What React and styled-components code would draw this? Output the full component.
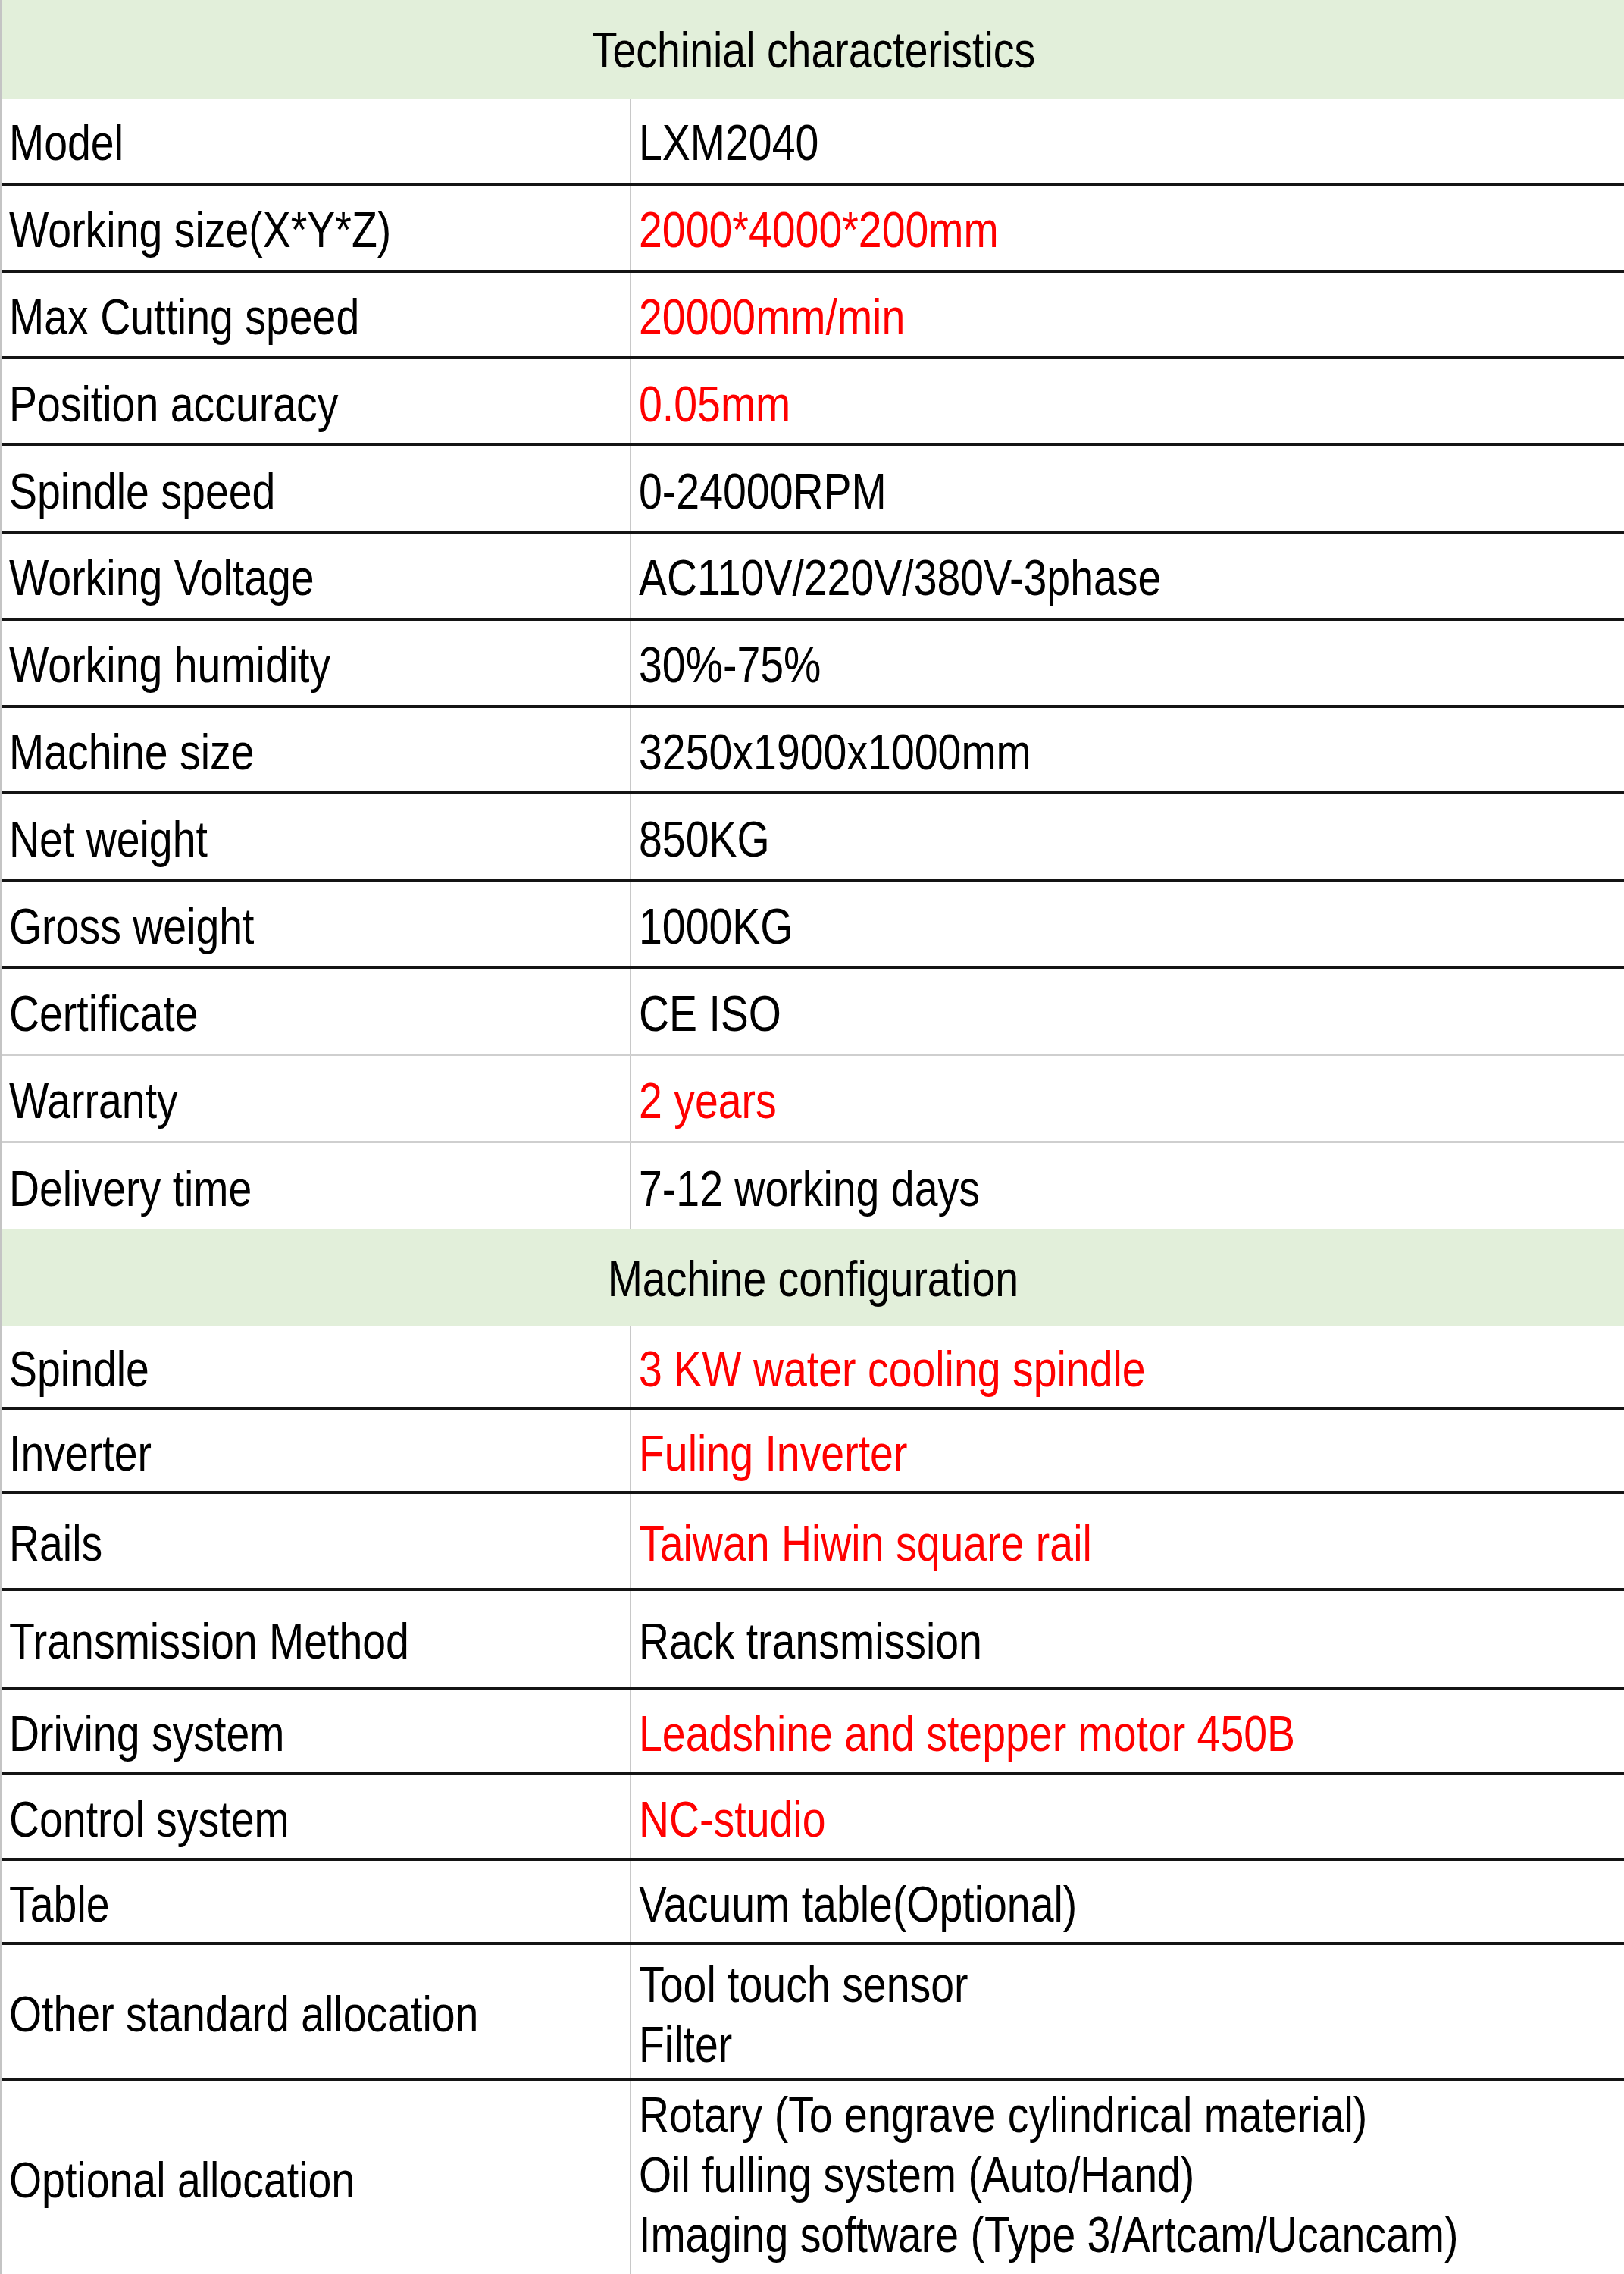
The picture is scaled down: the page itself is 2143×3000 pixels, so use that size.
import React from 'react';
import styled, { createGlobalStyle } from 'styled-components';

const GlobalStyle = createGlobalStyle`
  html, body {
    margin: 0;
    padding: 0;
    background: #ffffff;
  }
  body {
    font-family: "Liberation Sans", Arial, sans-serif;
    -webkit-font-smoothing: auto;
  }
`;

const Sheet = styled.div`
  width: 2143px;
  box-sizing: border-box;
  border-left: 3px solid #c4c4c4;
  display: flex;
  flex-direction: column;
  color: #000;
  font-size: 66px;
  line-height: 1.15;
`;

const SectionHeader = styled.div`
  height: ${p => p.$h}px;
  background-color: #e2efda;
  display: flex;
  align-items: center;
  justify-content: center;
  box-sizing: border-box;
  padding-top: 4px;
`;

const Narrow = styled.span`
  display: inline-block;
  white-space: nowrap;
  transform: scaleX(0.84);
  transform-origin: ${p => (p.$center ? 'center' : 'left')} center;
`;

const borders = {
  black: '4px solid #141414',
  gray: '3px solid #cfcfcf',
  none: '0 none'
};

const Row = styled.div`
  height: ${p => p.$h}px;
  display: grid;
  grid-template-columns: 828px 1fr;
  box-sizing: border-box;
  border-bottom: ${p => borders[p.$line]};
`;

const LabelCell = styled.div`
  display: flex;
  align-items: center;
  padding-left: 9px;
  padding-top: 8px;
  white-space: nowrap;
`;

const ValueCell = styled.div`
  display: flex;
  flex-direction: column;
  justify-content: center;
  align-items: flex-start;
  border-left: 2px solid #c8c8c8;
  padding-left: 10px;
  padding-top: ${p => (p.$lines > 2 ? 0 : 8)}px;
  padding-bottom: ${p => (p.$lines > 2 ? 8 : 0)}px;
  white-space: nowrap;
  color: ${p => (p.$red ? '#ff0000' : '#000000')};
`;

const Line = styled.div`
  line-height: 79px;
`;

const tech = [
  { label: 'Model', value: ['LXM2040'] },
  { label: 'Working size(X*Y*Z)', value: ['2000*4000*200mm'], red: true },
  { label: 'Max Cutting speed', value: ['20000mm/min'], red: true },
  { label: 'Position accuracy', value: ['0.05mm'], red: true },
  { label: 'Spindle speed', value: ['0-24000RPM'] },
  { label: 'Working Voltage', value: ['AC110V/220V/380V-3phase'] },
  { label: 'Working humidity', value: ['30%-75%'] },
  { label: 'Machine size', value: ['3250x1900x1000mm'] },
  { label: 'Net weight', value: ['850KG'] },
  { label: 'Gross weight', value: ['1000KG'] },
  { label: 'Certificate', value: ['CE ISO'], line: 'gray' },
  { label: 'Warranty', value: ['2 years'], red: true, line: 'gray' },
  { label: 'Delivery time', value: ['7-12 working days'], line: 'none' }
].map(r => ({ h: 114.8, line: 'black', ...r }));

const config = [
  { label: 'Spindle', value: ['3 KW water cooling spindle'], red: true, h: 111 },
  { label: 'Inverter', value: ['Fuling Inverter'], red: true, h: 111 },
  { label: 'Rails', value: ['Taiwan Hiwin square rail'], red: true, h: 128 },
  { label: 'Transmission Method', value: ['Rack transmission'], h: 130 },
  { label: 'Driving system', value: ['Leadshine and stepper motor 450B'], red: true, h: 113 },
  { label: 'Control system', value: ['NC-studio'], red: true, h: 113 },
  { label: 'Table', value: ['Vacuum table(Optional)'], h: 111 },
  { label: 'Other standard allocation', value: ['Tool touch sensor', 'Filter'], h: 180 },
  {
    label: 'Optional allocation',
    value: [
      'Rotary (To engrave cylindrical material)',
      'Oil fulling system (Auto/Hand)',
      'Imaging software (Type 3/Artcam/Ucancam)'
    ],
    h: 254,
    line: 'none'
  }
].map(r => ({ line: 'black', ...r }));

const SpecRow = ({ row }) => (
  <Row $h={row.h} $line={row.line}>
    <LabelCell>
      <Narrow>{row.label}</Narrow>
    </LabelCell>
    <ValueCell $red={row.red} $lines={row.value.length}>
      {row.value.length > 1
        ? row.value.map(v => (
            <Line key={v}>
              <Narrow>{v}</Narrow>
            </Line>
          ))
        : <Narrow>{row.value[0]}</Narrow>}
    </ValueCell>
  </Row>
);

export default function App() {
  return (
    <>
      <GlobalStyle />
      <Sheet>
        <SectionHeader $h={130}>
          <Narrow $center>Techinial characteristics</Narrow>
        </SectionHeader>
        {tech.map(r => <SpecRow key={r.label} row={r} />)}
        <SectionHeader $h={127}>
          <Narrow $center>Machine configuration</Narrow>
        </SectionHeader>
        {config.map(r => <SpecRow key={r.label} row={r} />)}
      </Sheet>
    </>
  );
}
